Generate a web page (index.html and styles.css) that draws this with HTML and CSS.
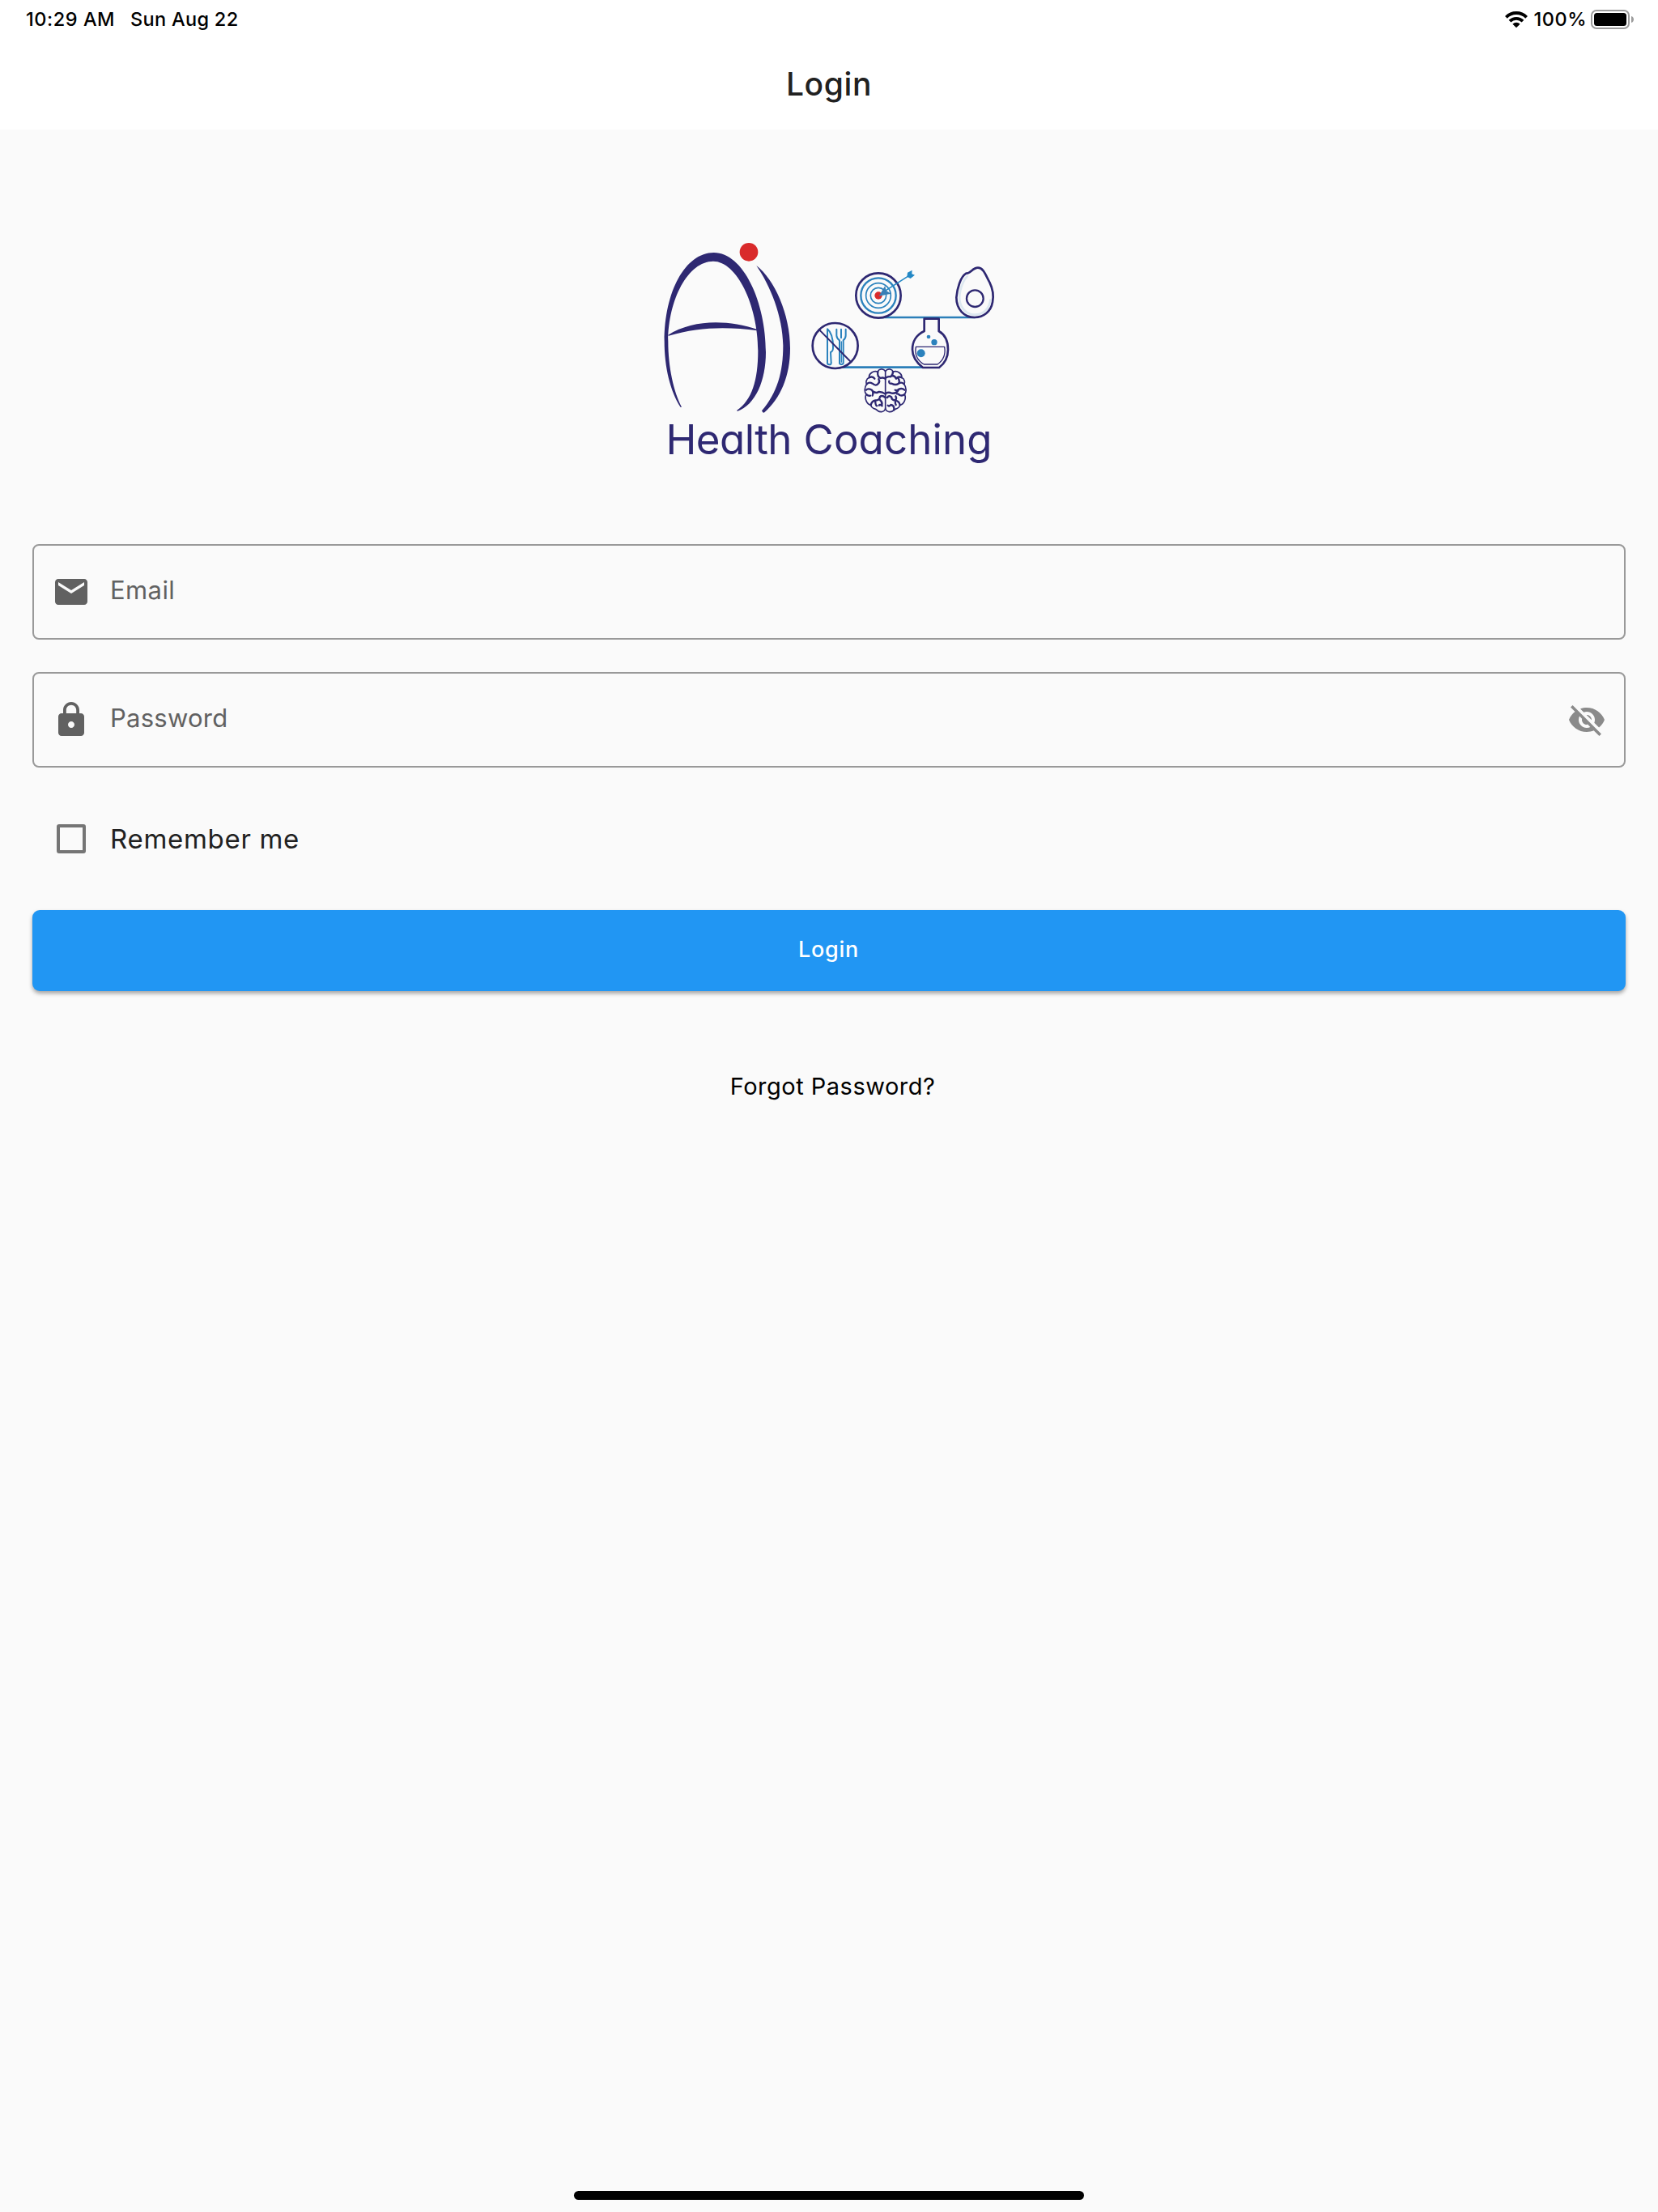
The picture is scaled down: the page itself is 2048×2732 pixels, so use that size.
FILE: index.html
```html
<!DOCTYPE html>
<html lang="en">
<head>
<meta charset="utf-8">
<title>Login</title>
<link rel="stylesheet" href="styles.css">
</head>
<body>
<header class="app-header">
  <div class="status-bar">
    <div class="status-left"><span class="status-time">10:29 AM</span><span class="status-date">Sun Aug 22</span></div>
    <div class="status-right">
      <svg class="wifi" viewBox="0 0 28 21" width="28" height="21"><g fill="none" stroke="#000" stroke-width="3.9"><path d="M1.4 7.3A17.8 17.8 0 0 1 26.6 7.3"/><path d="M6 12.2A11.3 11.3 0 0 1 22 12.2"/></g><path d="M14 20.3L9.4 15.7A6.5 6.5 0 0 1 18.6 15.7Z"/></svg>
      <span class="status-battery">100%</span>
      <svg class="battery" viewBox="0 0 54 24" width="54" height="24"><rect x="1" y="1" width="46" height="22" rx="6" fill="none" stroke="#9c9c9c" stroke-width="2"/><rect x="4" y="4" width="40" height="16" rx="3.5"/><path d="M50 8C54 9 54 15 50 16Z" fill="#9c9c9c"/></svg>
    </div>
  </div>
  <h1 class="title">Login</h1>
</header>
<main class="content">
  <svg class="logo" viewBox="0 0 440 300" width="440" height="300" role="img" aria-label="AI Health Coaching">
    <g transform="scale(.33333)" fill="#2e2872">
      <path d="M122 669C84 610 62 520 62 425C62 240 140 96 245 96C355 96 438 280 438 465C438 570 400 660 332 684L331 680C386 643 409 570 409 460C409 290 330 128 243 128C150 128 76 270 76 425C76 520 96 610 126 668Z"/>
      <path d="M75 402C170 341 300 345 407 381L407 385C300 370 190 370 78 404Z"/>
      <path d="M403 144C470 195 528 325 528 450C528 555 492 635 433 688Q427 692 423 682C480 615 502 540 502 440C500 330 455 220 403 144Z"/>
      <circle cx="375" cy="94" r="34" fill="#d92a2b"/>
    </g>
    <g transform="translate(180 20) scale(.33333)" fill="none" stroke="#2e2872" stroke-linecap="round" stroke-linejoin="round">
      <path d="M315 276H672M155 461H510" stroke="#2b7fb9" stroke-width="8"/>
      <circle cx="315" cy="195" r="83" fill="#fafafa" stroke-width="8"/>
      <g stroke="#2b82bd"><circle cx="315" cy="195" r="65" stroke-width="7"/><circle cx="315" cy="195" r="46" stroke-width="5"/><circle cx="315" cy="195" r="29" stroke-width="5"/></g>
      <circle cx="315" cy="195" r="14" fill="#d92a2b" stroke="none"/>
      <path d="M330 184L424 124" stroke="#2388c5" stroke-width="5"/>
      <path d="M317 197L340 158L343 176L362 188Z" fill="#397fb6" stroke="none"/>
      <path d="M421 125L423 110L440 101L439 115L450 119L434 132Z" fill="#2388c5" stroke="none"/>
      <path d="M640 113C657 115 663 92 684 92C704 92 712 118 727 146C739 170 743 195 738 220C732 255 704 276 672 276C632 276 604 245 604 202C607 170 619 125 640 113Z" fill="#fafafa" stroke-width="8"/>
      <path d="M644 124C626 142 613 185 616 211C620 244 643 265 671 266C704 266 726 244 730 212" stroke="#dde8f0" stroke-width="8"/>
      <circle cx="673" cy="206" r="31" fill="#fafafa" stroke-width="7"/>
      <circle cx="155" cy="381" r="84" fill="#fafafa" stroke-width="8"/>
      <g stroke="#2b82bd" stroke-width="6">
        <path d="M126 319V444Q126 451 133 451Q141 451 140 444L138 405Q148 402 147 385C147 348 138 329 126 319Z"/>
        <path d="M160 320V343Q160 354 171 361V445Q171 450 178 450Q185 450 185 445V361Q194 354 194 343V320M177 320V352"/>
        <path d="M178 366V442" stroke-width="4"/>
      </g>
      <path d="M97 323L210 438" stroke-width="6"/>
      <path d="M485 281H539V327C562 340 573 366 573 395C573 424 561 446 540 462H480C456 443 441 424 441 395C441 366 456 340 485 327Z" fill="#fafafa" stroke-width="8"/>
      <path d="M454 385H560C565 413 554 436 534 450H484C460 436 449 413 454 385Z" stroke-width="4"/>
      <g fill="#2b82bd" stroke="none"><circle cx="501" cy="348" r="7"/><circle cx="522" cy="368" r="11"/><circle cx="473" cy="409" r="15"/></g>
      <g stroke-width="5">
        <path d="M341 476C334 464 315 466 313 478C297 471 278 485 281 499C269 504 268 518 272 523C262 537 263 553 270 561C262 577 273 598 287 601C291 617 307 614 309 619C321 631 339 627 341 612"/>
        <path d="M341 476C348 464 367 466 369 478C385 471 404 485 401 499C413 504 414 518 410 523C420 537 419 553 412 561C420 577 409 598 395 601C391 617 375 614 373 619C361 631 343 627 341 612V476"/>
      </g>
      <g stroke-width="7">
        <path d="M313 478Q310 495 323 501Q334 497 341 504M281 499Q294 492 301 503M272 523Q281 514 293 521Q306 532 314 522Q322 514 316 505M270 545Q276 537 291 545Q298 553 293 566M293 549Q307 559 316 552Q328 551 341 560M270 561Q278 568 285 566M287 601Q290 586 304 583Q319 585 321 570Q329 563 341 573M304 583Q303 600 309 604M321 582Q331 590 328 600M317 602Q321 597 329 604"/>
        <path d="M369 478Q368 491 360 496Q350 493 341 501M401 499Q388 492 381 503Q376 492 366 492M410 523Q401 514 390 521Q378 529 365 521Q352 523 355 512M390 521Q395 511 389 502M412 545Q403 537 391 542Q382 549 377 545M391 542Q383 559 364 557Q353 551 341 558M412 561Q404 568 394 564Q387 558 383 559M395 601Q392 586 378 584Q363 582 364 572Q355 563 348 573M378 584Q384 575 379 568M373 619Q375 602 361 600Q354 608 350 602M378 584Q376 594 380 600"/>
      </g>
    </g>
    <g class="logo-text">
      <text x="22.5" y="281" textLength="156">Health</text>
      <text x="192.5" y="281" textLength="233">Coaching</text>
    </g>
  </svg>
  <form class="login-form">
    <label class="field">
      <svg class="icon" viewBox="0 0 24 24"><path d="M20 4H4c-1.1 0-1.99.9-1.99 2L2 18c0 1.1.9 2 2 2h16c1.1 0 2-.9 2-2V6c0-1.100-.9-2-2-2zm0 4l-8 5-8-5V6l8 5 8-5v2z"/></svg>
      <span class="label label-email">Email</span>
    </label>
    <label class="field">
      <svg class="icon" viewBox="0 0 24 24"><path d="M18 8h-1V6c0-2.760-2.240-5-5-5S7 3.240 7 6v2H6c-1.100 0-2 .9-2 2v10c0 1.100.9 2 2 2h12c1.100 0 2-.9 2-2V10c0-1.100-.9-2-2-2zm-6 9c-1.100 0-2-.9-2-2s.9-2 2-2 2 .9 2 2-.9 2-2 2zm3.100-9H8.900V6c0-1.710 1.390-3.100 3.100-3.100 1.710 0 3.100 1.390 3.100 3.100v2z"/></svg>
      <span class="label label-password">Password</span>
      <svg class="icon icon-eye" viewBox="0 0 24 24"><path d="M12 7c2.760 0 5 2.240 5 5 0 .65-.13 1.260-.36 1.830l2.920 2.920c1.510-1.260 2.700-2.890 3.430-4.750-1.730-4.390-6-7.500-11-7.500-1.400 0-2.740.25-3.980.7l2.160 2.160C10.740 7.130 11.350 7 12 7zM2 4.270l2.280 2.280.46.46C3.080 8.300 1.780 10.020 1 12c1.730 4.390 6 7.500 11 7.500 1.550 0 3.030-.3 4.380-.84l.42.42L19.730 22 21 20.730 3.270 3 2 4.270zM7.530 9.800l1.550 1.550c-.05.21-.08.43-.08.65 0 1.660 1.340 3 3 3 .22 0 .44-.03.65-.08l1.550 1.550c-.67.33-1.410.53-2.200.53-2.760 0-5-2.240-5-5 0-.79.2-1.530.53-2.200zm4.310-.78l3.150 3.150.02-.16c0-1.660-1.340-3-3-3l-.17.01z"/></svg>
    </label>
    <label class="remember"><span class="checkbox"></span><span class="remember-text">Remember me</span></label>
    <button class="submit" type="button">Login</button>
    <a class="forgot">Forgot Password?</a>
  </form>
</main>
<footer class="home"><div class="home-bar"></div></footer>
</body>
</html>
```
FILE: styles.css
```css
* { box-sizing: border-box; }
body {
  margin: 0;
  min-height: 2732px;
  display: flex;
  flex-direction: column;
  background: #fafafa;
  color: #212121;
  font-family: Inter, "Liberation Sans", sans-serif;
}
.app-header { height: 160px; background: #fff; }
.status-bar {
  height: 48px;
  padding: 0 29px 0 32px;
  display: flex;
  justify-content: space-between;
  color: #000;
  font-size: 23.5px;
  font-weight: 500;
  line-height: 48px;
}
.status-left { display: flex; gap: 19px; }
.status-time { letter-spacing: .55px; }
.status-date { letter-spacing: .3px; }
.status-battery { letter-spacing: .5px; }
.status-right { display: flex; }
.wifi { margin: 14px 8px 0 0; }
.battery { margin: 12px 0 0 5px; }
.title {
  margin: 0;
  height: 112px;
  font-size: 39px;
  font-weight: 450;
  letter-spacing: .6px;
  line-height: 112px;
  text-align: center;
}
.content { flex: 1; padding: 120px 40px 0; }
.logo { display: block; margin: 0 0 92px 760px; }
.logo-text {
  font-size: 51px;
  font-weight: 400;
  font-feature-settings: "cv11";
  fill: #2e2872;
}
.login-form { display: flex; flex-direction: column; }
.field {
  height: 118px;
  margin-bottom: 40px;
  padding: 0 22px;
  display: flex;
  align-items: center;
  border: 2px solid #999;
  border-radius: 8px;
  color: #616161;
  font-size: 31px;
  font-weight: 370;
}
.icon { width: 48px; height: 48px; fill: #616161; }
.icon-eye { margin-left: auto; fill: #8a8a8a; }
.label { margin: 0 0 5px 24px; }
.label-email { letter-spacing: .4px; }
.label-password { letter-spacing: .25px; }
.remember {
  height: 96px;
  display: flex;
  align-items: center;
  padding-left: 30px;
  font-size: 33px;
  font-weight: 370;
  letter-spacing: .7px;
}
.checkbox {
  width: 36px;
  height: 36px;
  margin-right: 30px;
  border: 4px solid #757575;
  border-radius: 3px;
}
.submit {
  height: 100px;
  margin-top: 40px;
  padding: 0 1px 2px 0;
  border: 0;
  border-radius: 9px;
  background: #2196f3;
  box-shadow: 0 3px 5px rgba(0, 0, 0, .35);
  color: #fff;
  font: 500 27px/98px Inter, sans-serif;
  letter-spacing: .7px;
}
.forgot {
  margin-top: 88px;
  padding-left: 9px;
  color: #000;
  font-size: 29px;
  font-weight: 370;
  letter-spacing: .5px;
  line-height: 60px;
  text-align: center;
}
.home { height: 26px; display: flex; justify-content: center; }
.home-bar { width: 630px; height: 11px; border-radius: 6px; background: #000; }
```
